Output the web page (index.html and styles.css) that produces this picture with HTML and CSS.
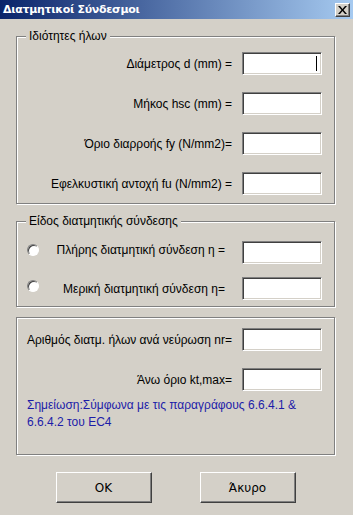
FILE: index.html
```html
<html>

<head>
  <meta charset="UTF-8">
  <title>Διατμητικοί Σύνδεσμοι</title>
  <link rel="stylesheet" href="styles.css">
</head>

<body>
  <div class="window">
    <div class="titlebar">
      <span class="title">Διατμητικοί Σύνδεσμοι</span>
      <span class="close">
        <svg width="9" height="8" viewBox="0 0 9 8">
          <path d="M0 0h2l2.5 3 2.5-3h2l-3.5 4 3.5 4h-2l-2.5-3-2.5 3h-2l3.5-4z" fill="#000" />
        </svg>
      </span>
    </div>

    <div class="client">
      <fieldset class="group props">
        <legend>Ιδιότητες ήλων</legend>
        <div class="row"><label>Διάμετρος d (mm) =</label><div class="field"><span class="caret"></span></div></div>
        <div class="row"><label>Μήκος hsc (mm) =</label><div class="field"></div></div>
        <div class="row"><label>Όριο διαρροής fy (N/mm2)=</label><div class="field"></div></div>
        <div class="row"><label>Εφελκυστική αντοχή fu (N/mm2) =</label><div class="field"></div></div>
      </fieldset>

      <fieldset class="group kind">
        <legend>Είδος διατμητικής σύνδεσης</legend>
        <div class="row choice"><span class="radio"></span><label class="full">Πλήρης διατμητική σύνδεση η =</label><div class="field"></div></div>
        <div class="row choice"><span class="radio"></span><label class="part">Μερική διατμητική σύνδεση η=</label><div class="field"></div></div>
      </fieldset>

      <div class="group ribs">
        <div class="row"><label>Αριθμός διατμ. ήλων ανά νεύρωση nr=</label><div class="field"></div></div>
        <div class="row"><label>Άνω όριο kt,max=</label><div class="field"></div></div>
        <p class="note">Σημείωση:Σύμφωνα με τις παραγράφους 6.6.4.1 &amp;<br>6.6.4.2 του EC4</p>
      </div>

      <div class="buttons">
        <button class="button">OK</button>
        <button class="button">Άκυρο</button>
      </div>
    </div>
  </div>
</body>

</html>
```

FILE: styles.css
```css
body {
  margin: 0;
  background: #d4d0c8;
  font-family: "Liberation Sans", Arial, sans-serif;
  font-size: 12px;
  color: #000;
}

.window {
  width: 353px;
  height: 515px;
  background: #d4d0c8;
}

/* title bar */
.titlebar {
  height: 19px;
  display: flex;
  align-items: center;
  justify-content: space-between;
  padding: 0 3px 0 3px;
  background: linear-gradient(to right, #0a246a, #a6caf0);
  box-sizing: border-box;
}

.title {
  color: #fff;
  font-family: "DejaVu Sans", Verdana, sans-serif;
  font-weight: bold;
  font-size: 11px;
  letter-spacing: -0.3px;
}

.close {
  width: 15px;
  height: 14px;
  box-sizing: border-box;
  display: flex;
  align-items: center;
  justify-content: center;
  background: #d4d0c8;
  border: 1px solid;
  border-color: #fff #404040 #404040 #fff;
  box-shadow: inset -1px -1px #808080;
  margin-top: 1px;
}

.client {
  padding: 10px 0 0 16px;
}

/* group boxes */
.group {
  width: 319px;
  margin: 0;
  box-sizing: border-box;
  border: 1px solid #808080;
  box-shadow: inset 1px 1px #fff, 1px 1px #fff;
  min-width: 0;
}

.group legend {
  padding: 0 3px;
  margin-left: 9px;
  line-height: 14px;
  background: #d4d0c8;
  position: relative;
}

.props {
  padding: 9px 12px 8px 0;
}

.kind {
  margin-top: 10px;
  padding: 13px 12px 6px 0;
}

.ribs {
  margin-top: 10px;
  padding: 10px 12px 23px 0;
}

.row {
  display: flex;
  align-items: center;
  justify-content: flex-end;
  height: 23px;
}

.props .row + .row {
  margin-top: 17px;
}

.kind .row + .row {
  margin-top: 13px;
}

.ribs .row + .row {
  margin-top: 17px;
}

.row label {
  margin-right: 10px;
}

.field {
  width: 80px;
  height: 23px;
  box-sizing: border-box;
  background: #fff;
  border: 1px solid;
  border-color: #808080 #fff #fff #808080;
  box-shadow: inset 1px 1px #404040, inset -1px -1px #d4d0c8;
  display: flex;
  justify-content: flex-end;
  align-items: center;
  padding-right: 4px;
}

.caret {
  width: 1px;
  height: 15px;
  background: #000;
}

.choice {
  justify-content: flex-start;
  padding-left: 10px;
}

.choice .radio,
.choice .full {
  margin-top: -6px;
}

.radio {
  width: 12px;
  height: 12px;
  box-sizing: border-box;
  border-radius: 50%;
  background: #fff;
  border: 1px solid;
  border-color: #808080 #fff #fff #808080;
  box-shadow: inset 1px 1px #404040;
  flex: none;
}

.choice label {
  flex: 1;
  text-align: right;
  margin-right: 17px;
}

.note {
  margin: 6px 0 0 10px;
  color: #1c1ca8;
  line-height: 17px;
}

.buttons {
  width: 319px;
  display: flex;
  justify-content: center;
  gap: 48px;
  margin-top: 17px;
}

.button {
  width: 96px;
  height: 31px;
  box-sizing: border-box;
  background: #d4d0c8;
  font-family: "DejaVu Sans", Verdana, sans-serif;
  font-size: 12px;
  color: #000;
  border: 1px solid;
  border-color: #fff #404040 #404040 #fff;
  box-shadow: inset -1px -1px #808080;
  padding: 0;
}
```
